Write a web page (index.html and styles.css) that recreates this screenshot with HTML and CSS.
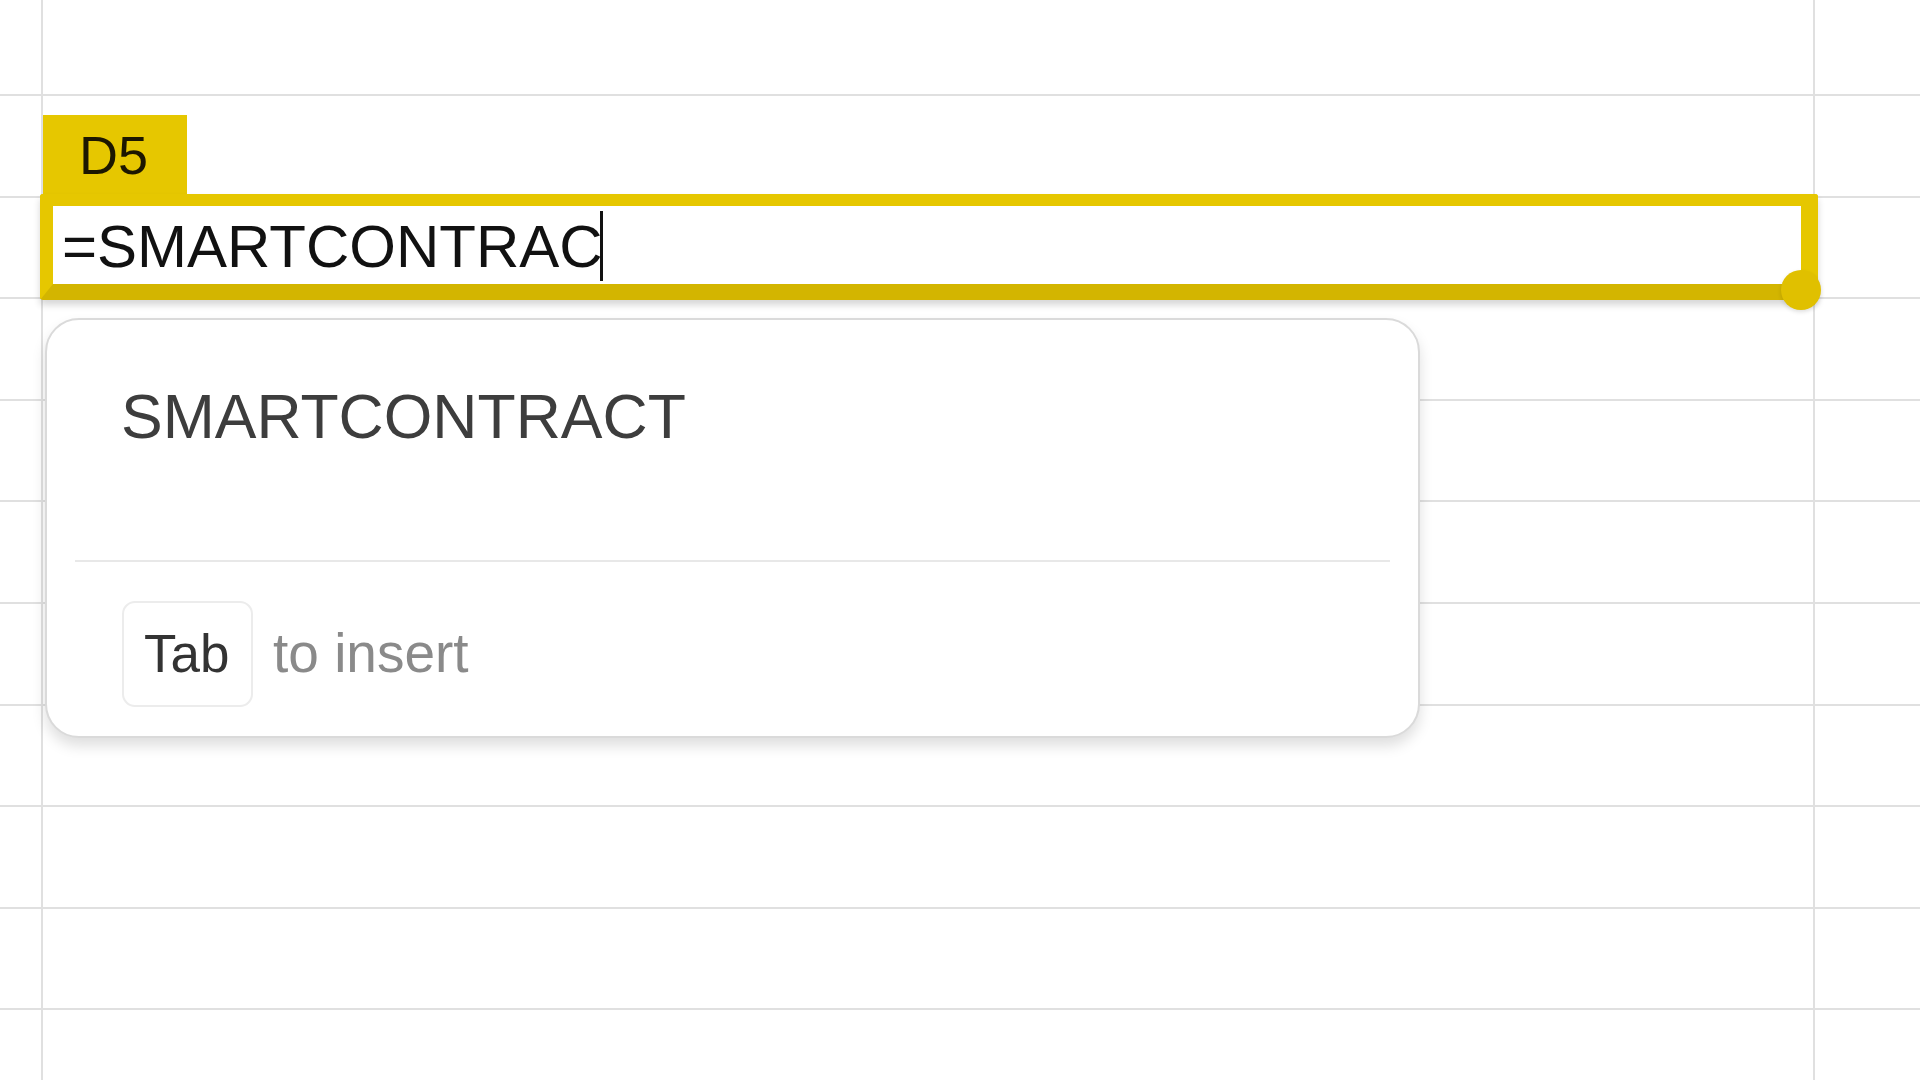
FILE: index.html
```html
<!DOCTYPE html>
<html lang="en">
<head>
<meta charset="utf-8">
<title>Sheet</title>
<link rel="stylesheet" href="styles.css">
</head>
<body>
<div class="sheet">
  <div class="row row-first"><div class="cell c0"></div><div class="cell c1"></div><div class="cell c2"></div></div>
  <div class="row"><div class="cell c0"></div><div class="cell c1"></div><div class="cell c2"></div></div>
  <div class="row"><div class="cell c0"></div><div class="cell c1"></div><div class="cell c2"></div></div>
  <div class="row"><div class="cell c0"></div><div class="cell c1"></div><div class="cell c2"></div></div>
  <div class="row"><div class="cell c0"></div><div class="cell c1"></div><div class="cell c2"></div></div>
  <div class="row"><div class="cell c0"></div><div class="cell c1"></div><div class="cell c2"></div></div>
  <div class="row"><div class="cell c0"></div><div class="cell c1"></div><div class="cell c2"></div></div>
  <div class="row"><div class="cell c0"></div><div class="cell c1"></div><div class="cell c2"></div></div>
  <div class="row"><div class="cell c0"></div><div class="cell c1"></div><div class="cell c2"></div></div>
  <div class="row"><div class="cell c0"></div><div class="cell c1"></div><div class="cell c2"></div></div>
  <div class="row"><div class="cell c0"></div><div class="cell c1"></div><div class="cell c2"></div></div>
</div>

<div class="cell-label">D5</div>
<div class="editor"><span class="editor-text">=SMARTCONTRAC</span><span class="caret"></span></div>
<div class="fill-handle"></div>

<div class="suggest">
  <div class="suggest-title">SMARTCONTRACT</div>
  <div class="suggest-divider"></div>
  <div class="suggest-footer">
    <span class="key">Tab</span>
    <span class="hint">to insert</span>
  </div>
</div>
</body>
</html>
```

FILE: styles.css
```css
html, body {
  margin: 0;
  padding: 0;
  background: #ffffff;
  overflow: hidden;
}

body {
  width: 1920px;
  height: 1080px;
  position: relative;
  font-family: "Liberation Sans", Arial, sans-serif;
}

.sheet {
  display: flex;
  flex-direction: column;
}

.row {
  display: grid;
  grid-template-columns: 43px 1772px 1fr;
  height: 101.6px;
  box-sizing: border-box;
  border-bottom: 2px solid #e0e0e0;
}

.row-first {
  height: 96px;
}

.cell {
  border-right: 2px solid #e0e0e0;
}

.c0 { margin-left: -1px; }

.cell.c2 {
  border-right: none;
}

.cell-label {
  position: absolute;
  left: 43px;
  top: 115px;
  width: 144px;
  height: 82px;
  box-sizing: border-box;
  background: #e6c700;
  color: #1c1700;
  font-size: 54px;
  line-height: 54px;
  padding: 13px 0 0 36px;
}

.editor {
  position: absolute;
  left: 40px;
  top: 194px;
  width: 1778px;
  height: 106px;
  box-sizing: border-box;
  background: #ffffff;
  border-style: solid;
  border-color: #e6c700;
  border-bottom-color: #d3b500;
  border-width: 12px 17px 16px 13px;
  border-radius: 3px;
  box-shadow: 0 5px 7px rgba(0, 0, 0, 0.16);
  padding: 5px 0 0 9px;
  font-size: 60px;
  line-height: 60px;
  color: #111111;
  white-space: nowrap;
}

.caret {
  display: inline-block;
  width: 3px;
  height: 70px;
  background: #111111;
  margin-left: -3px;
  vertical-align: -14px;
}

.fill-handle {
  position: absolute;
  left: 1781px;
  top: 270px;
  width: 40px;
  height: 40px;
  border-radius: 50%;
  background: #e0c000;
  box-shadow: 0 2px 4px rgba(0, 0, 0, 0.12);
}

.suggest {
  position: absolute;
  left: 45px;
  top: 318px;
  width: 1375px;
  height: 420px;
  box-sizing: border-box;
  background: #ffffff;
  border: 2px solid #dadada;
  border-radius: 34px;
  box-shadow: 0 8px 14px rgba(0, 0, 0, 0.13);
  padding: 0 28px;
  display: flex;
  flex-direction: column;
}

.suggest-title {
  margin: 65px 0 0 46px;
  font-size: 62.5px;
  line-height: 62px;
  color: #3d3d3d;
  white-space: nowrap;
}

.suggest-divider {
  margin-top: 113px;
  height: 2px;
  background: #e8e8e8;
}

.suggest-footer {
  margin-top: 39px;
  padding-left: 47px;
  display: flex;
  align-items: baseline;
  gap: 20px;
}

.key {
  display: inline-block;
  width: 131px;
  height: 106px;
  box-sizing: border-box;
  border: 2px solid #ececec;
  border-radius: 13px;
  padding: 25px 0 0 20px;
  font-size: 53px;
  line-height: 52px;
  color: #333333;
}

.hint {
  font-size: 55px;
  line-height: 52px;
  color: #8a8a8a;
}
```
